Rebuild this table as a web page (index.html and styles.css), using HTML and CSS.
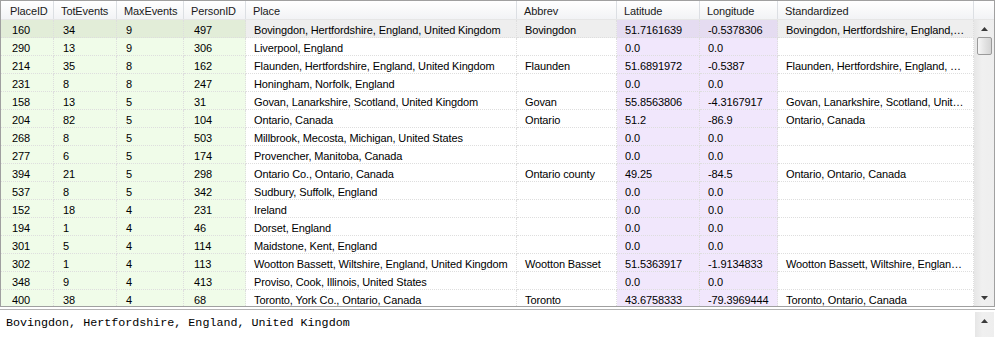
FILE: index.html
```html
<!DOCTYPE html>
<html>
<head>
<meta charset="utf-8">
<link rel="stylesheet" href="styles.css">
</head>
<body>
<div class="grid">
  <div class="head">
    <div class="hc c1">PlaceID</div><div class="hc c2">TotEvents</div><div class="hc c3">MaxEvents</div><div class="hc c4">PersonID</div><div class="hc c5">Place</div><div class="hc c6">Abbrev</div><div class="hc c7">Latitude</div><div class="hc c8">Longitude</div><div class="hc c9">Standardized</div><div class="hc filler"></div>
  </div>
  <div class="body">
    <div class="rows">
      <div class="row sel"><div class="c c1 g">160</div><div class="c c2 g">34</div><div class="c c3 g">9</div><div class="c c4 g">497</div><div class="c c5">Bovingdon, Hertfordshire, England, United Kingdom</div><div class="c c6">Bovingdon</div><div class="c c7 p">51.7161639</div><div class="c c8 p">-0.5378306</div><div class="c c9">Bovingdon, Hertfordshire, England,…</div></div>
      <div class="row"><div class="c c1 g">290</div><div class="c c2 g">13</div><div class="c c3 g">9</div><div class="c c4 g">306</div><div class="c c5">Liverpool, England</div><div class="c c6"></div><div class="c c7 p">0.0</div><div class="c c8 p">0.0</div><div class="c c9"></div></div>
      <div class="row"><div class="c c1 g">214</div><div class="c c2 g">35</div><div class="c c3 g">8</div><div class="c c4 g">162</div><div class="c c5">Flaunden, Hertfordshire, England, United Kingdom</div><div class="c c6">Flaunden</div><div class="c c7 p">51.6891972</div><div class="c c8 p">-0.5387</div><div class="c c9">Flaunden, Hertfordshire, England, …</div></div>
      <div class="row"><div class="c c1 g">231</div><div class="c c2 g">8</div><div class="c c3 g">8</div><div class="c c4 g">247</div><div class="c c5">Honingham, Norfolk, England</div><div class="c c6"></div><div class="c c7 p">0.0</div><div class="c c8 p">0.0</div><div class="c c9"></div></div>
      <div class="row"><div class="c c1 g">158</div><div class="c c2 g">13</div><div class="c c3 g">5</div><div class="c c4 g">31</div><div class="c c5">Govan, Lanarkshire, Scotland, United Kingdom</div><div class="c c6">Govan</div><div class="c c7 p">55.8563806</div><div class="c c8 p">-4.3167917</div><div class="c c9">Govan, Lanarkshire, Scotland, Unit…</div></div>
      <div class="row"><div class="c c1 g">204</div><div class="c c2 g">82</div><div class="c c3 g">5</div><div class="c c4 g">104</div><div class="c c5">Ontario, Canada</div><div class="c c6">Ontario</div><div class="c c7 p">51.2</div><div class="c c8 p">-86.9</div><div class="c c9">Ontario, Canada</div></div>
      <div class="row"><div class="c c1 g">268</div><div class="c c2 g">8</div><div class="c c3 g">5</div><div class="c c4 g">503</div><div class="c c5">Millbrook, Mecosta, Michigan, United States</div><div class="c c6"></div><div class="c c7 p">0.0</div><div class="c c8 p">0.0</div><div class="c c9"></div></div>
      <div class="row"><div class="c c1 g">277</div><div class="c c2 g">6</div><div class="c c3 g">5</div><div class="c c4 g">174</div><div class="c c5">Provencher, Manitoba, Canada</div><div class="c c6"></div><div class="c c7 p">0.0</div><div class="c c8 p">0.0</div><div class="c c9"></div></div>
      <div class="row"><div class="c c1 g">394</div><div class="c c2 g">21</div><div class="c c3 g">5</div><div class="c c4 g">298</div><div class="c c5">Ontario Co., Ontario, Canada</div><div class="c c6">Ontario county</div><div class="c c7 p">49.25</div><div class="c c8 p">-84.5</div><div class="c c9">Ontario, Ontario, Canada</div></div>
      <div class="row"><div class="c c1 g">537</div><div class="c c2 g">8</div><div class="c c3 g">5</div><div class="c c4 g">342</div><div class="c c5">Sudbury, Suffolk, England</div><div class="c c6"></div><div class="c c7 p">0.0</div><div class="c c8 p">0.0</div><div class="c c9"></div></div>
      <div class="row"><div class="c c1 g">152</div><div class="c c2 g">18</div><div class="c c3 g">4</div><div class="c c4 g">231</div><div class="c c5">Ireland</div><div class="c c6"></div><div class="c c7 p">0.0</div><div class="c c8 p">0.0</div><div class="c c9"></div></div>
      <div class="row"><div class="c c1 g">194</div><div class="c c2 g">1</div><div class="c c3 g">4</div><div class="c c4 g">46</div><div class="c c5">Dorset, England</div><div class="c c6"></div><div class="c c7 p">0.0</div><div class="c c8 p">0.0</div><div class="c c9"></div></div>
      <div class="row"><div class="c c1 g">301</div><div class="c c2 g">5</div><div class="c c3 g">4</div><div class="c c4 g">114</div><div class="c c5">Maidstone, Kent, England</div><div class="c c6"></div><div class="c c7 p">0.0</div><div class="c c8 p">0.0</div><div class="c c9"></div></div>
      <div class="row"><div class="c c1 g">302</div><div class="c c2 g">1</div><div class="c c3 g">4</div><div class="c c4 g">113</div><div class="c c5">Wootton Bassett, Wiltshire, England, United Kingdom</div><div class="c c6">Wootton Basset</div><div class="c c7 p">51.5363917</div><div class="c c8 p">-1.9134833</div><div class="c c9">Wootton Bassett, Wiltshire, Englan…</div></div>
      <div class="row"><div class="c c1 g">348</div><div class="c c2 g">9</div><div class="c c3 g">4</div><div class="c c4 g">413</div><div class="c c5">Proviso, Cook, Illinois, United States</div><div class="c c6"></div><div class="c c7 p">0.0</div><div class="c c8 p">0.0</div><div class="c c9"></div></div>
      <div class="row"><div class="c c1 g">400</div><div class="c c2 g">38</div><div class="c c3 g">4</div><div class="c c4 g">68</div><div class="c c5">Toronto, York Co., Ontario, Canada</div><div class="c c6">Toronto</div><div class="c c7 p">43.6758333</div><div class="c c8 p">-79.3969444</div><div class="c c9">Toronto, Ontario, Canada</div></div>
    </div>
    <div class="vscroll">
      <div class="arrow"><svg width="7" height="4" viewBox="0 0 7 4"><path d="M0 4 L3.5 0 L7 4 Z" fill="#3a3a3a"/></svg></div>
      <div class="thumb"></div>
      <div class="track"></div>
      <div class="arrow"><svg width="7" height="4" viewBox="0 0 7 4"><path d="M0 0 L3.5 4 L7 0 Z" fill="#3a3a3a"/></svg></div>
    </div>
  </div>
</div>
<div class="memo">
  <div class="memo-text">Bovingdon, Hertfordshire, England, United Kingdom</div>
  <div class="vscroll memo-scroll">
    <div class="arrow"><svg width="7" height="4" viewBox="0 0 7 4"><path d="M0 4 L3.5 0 L7 4 Z" fill="#3a3a3a"/></svg></div>
  </div>
</div>
</body>
</html>
```
FILE: styles.css
```css
html, body {
  margin: 0;
  padding: 0;
  background: #ffffff;
}
body {
  width: 995px;
  height: 337px;
  overflow: hidden;
  font-family: "Liberation Sans", Arial, sans-serif;
  font-size: 11px;
  letter-spacing: -0.12px;
  color: #000;
}
.grid {
  box-sizing: border-box;
  width: 995px;
  height: 307px;
  border: 1px solid #a0a0a0;
  display: flex;
  flex-direction: column;
  overflow: hidden;
}
.head {
  display: flex;
  height: 19px;
  flex: none;
  background: linear-gradient(#ffffff, #f2f3f5);
  border-bottom: 1px solid #e6e6e6;
  box-sizing: border-box;
}
.hc {
  box-sizing: border-box;
  height: 18px;
  line-height: 19px;
  padding-top: 1px;
  padding-left: 7px;
  border-right: 1px solid #dcdfe3;
  color: #1a1a1a;
  white-space: nowrap;
  overflow: hidden;
}
.hc.filler {
  width: 20px;
  border-right: none;
}
.c1 { width: 53px; }
.c2 { width: 63px; }
.c3 { width: 67px; }
.c4 { width: 62px; }
.c5 { width: 271px; }
.c6 { width: 100px; }
.c7 { width: 83px; }
.c8 { width: 78px; }
.c9 { width: 196px; }
.hc.c1 { padding-left: 9px; }
.body {
  display: flex;
  flex: 1;
  min-height: 0;
}
.rows {
  width: 973px;
  overflow: hidden;
}
.row {
  display: flex;
  height: 18px;
}
.c {
  box-sizing: border-box;
  height: 18px;
  line-height: 17px;
  padding-top: 2px;
  padding-left: 8px;
  border-right: 1px dotted #dedede;
  border-bottom: 1px dotted #dedede;
  white-space: nowrap;
  overflow: hidden;
  background: #ffffff;
}
.c.c1 { padding-left: 11px; }
.c.c2 { padding-left: 9px; }
.c.c3 { padding-left: 9px; }
.c.c4 { padding-left: 10px; }
.c.g { background: #f0fce9; }
.c.p { background: #f1e7fc; }
.row.sel .c { background: #eeeeee; }
.row.sel .c.g { background: #e2edd8; }
.row.sel .c.p { background: #e5dcf1; }
.vscroll {
  width: 20px;
  flex: none;
  display: flex;
  flex-direction: column;
  align-items: center;
  background: linear-gradient(90deg, #e6e6e6, #f0f0f0 40%, #eeeeee);
}
.arrow {
  height: 17px;
  width: 20px;
  flex: none;
  display: flex;
  align-items: center;
  justify-content: center;
}
.thumb {
  box-sizing: border-box;
  width: 15px;
  height: 18px;
  flex: none;
  border: 1px solid #9a9a9a;
  border-radius: 2px;
  background: linear-gradient(90deg, #f6f6f6, #e2e2e2 55%, #d4d4d4);
}
.track {
  flex: 1;
}
.memo {
  box-sizing: border-box;
  margin-top: 2px;
  height: 28px;
  border-top: 1px solid #b4b4b4;
  display: flex;
}
.memo-text {
  flex: 1;
  padding: 6px 0 0 6px;
  font-family: "Liberation Mono", "Courier New", monospace;
  font-size: 11.7px;
  letter-spacing: 0;
  line-height: 14px;
  color: #000;
  white-space: nowrap;
}
.memo-scroll {
  margin-top: 2px;
  margin-right: 1px;
  width: 19px;
}
.memo-scroll .arrow {
  width: 19px;
  height: 17px;
}
```
